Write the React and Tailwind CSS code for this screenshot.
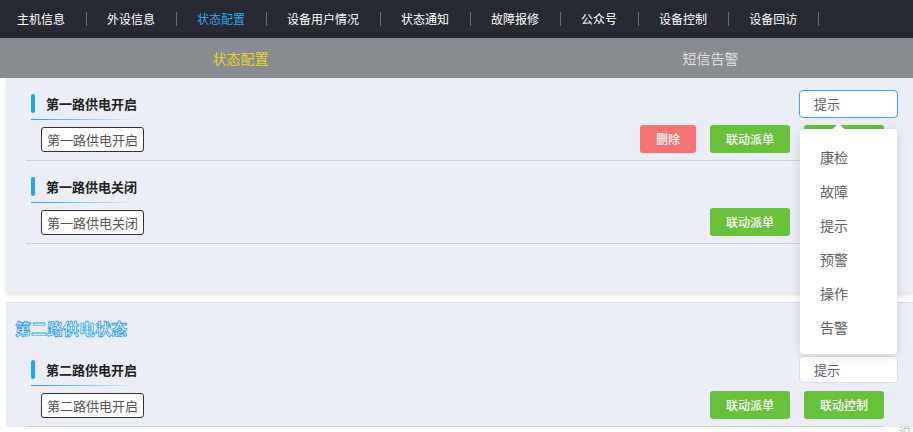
import React from "react";

const navItems = ["主机信息", "外设信息", "状态配置", "设备用户情况", "状态通知", "故障报修", "公众号", "设备控制", "设备回访"];
const options = ["康检", "故障", "提示", "预警", "操作", "告警"];

function Btn({ color, w, children }) {
  return (
    <div
      className={`h-[28px] ${w} rounded-[3px] ${color} text-white text-[12px] font-medium flex items-center justify-center`}
    >
      {children}
    </div>
  );
}

function Select({ focused, h }) {
  return (
    <div
      className={`w-[99px] ${h} mr-[-14px] rounded-[4px] bg-white border ${
        focused ? "border-[#409eff]" : "border-[#dcdfe6]"
      } flex items-center pl-[14px] text-[13px] text-[#606266] shrink-0`}
    >
      提示
    </div>
  );
}

function Row({ title, buttons, select }) {
  return (
    <div>
      <div className="pt-[16px] pl-[5px]">
        <div className="flex items-center justify-between h-[19px]">
          <div className="flex items-center">
            <div className="w-[4px] h-[19px] rounded-[2px] bg-[#1fa3f5]" />
            <div className="ml-[11px] text-[13px] font-bold text-[#222] leading-[19px]">{title}</div>
          </div>
          {select}
        </div>
        <div className="mt-[6px] h-px w-[106px] bg-gradient-to-r from-[#1fa3f5] to-transparent" />
        <div className="mt-[5px] h-[28px] flex items-center justify-between">
          <div className="ml-[10px] h-[25px] px-[5px] border border-[#333] rounded-[3px] bg-white text-[13px] text-[#555] leading-[23px]">
            {title}
          </div>
          <div className="flex items-center gap-[14px]">{buttons}</div>
        </div>
      </div>
      <div className="mt-[7px] h-px bg-[#cfd0d4]" />
    </div>
  );
}

export default function App() {
  return (
    <div
      className="relative w-full h-[432px] overflow-hidden bg-white"
      style={{ fontFamily: '"Noto Sans CJK SC", "Noto Sans", sans-serif' }}
    >
      {/* top nav */}
      <div className="h-[38px] bg-[#272a33] flex items-center pl-[17px]">
        {navItems.map((t, i) => (
          <div key={t} className="flex items-center">
            <span
              className={`text-[12px] ${i === 2 ? "text-[#2ea6e6]" : "text-white"} ${i === 0 ? "pr-[20.5px]" : "px-[20.5px]"}`}
            >
              {t}
            </span>
            <span className="w-px h-[14px] bg-[#6b6e75]" />
          </div>
        ))}
      </div>

      {/* sub tabs */}
      <div className="h-[40px] bg-[#888b8f] flex items-center overflow-hidden">
        <div className="w-[481px] shrink-0 text-center text-[14px] text-[#e8d41c]">状态配置</div>
        <div className="w-[459px] shrink-0 text-center text-[14px] text-[#dddddd]">短信告警</div>
      </div>

      <div className="pl-[6px]">
        {/* panel 1 */}
        <div className="bg-[#eaedf5] pb-[48px] shadow-[0_3px_4px_rgba(0,0,0,0.12)]">
          <div className="ml-[20px] w-[858px]">
            <Row
              title="第一路供电开启"
              select={<Select focused h="h-[28px]" />}
              buttons={
                <>
                  <Btn color="bg-[#f77272]" w="w-[56px]">删除</Btn>
                  <Btn color="bg-[#67c23a]" w="w-[80px]">联动派单</Btn>
                  <Btn color="bg-[#67c23a]" w="w-[80px]">联动控制</Btn>
                </>
              }
            />
            <Row
              title="第一路供电关闭"
              buttons={
                <>
                  <Btn color="bg-[#67c23a]" w="w-[80px]">联动派单</Btn>
                  <div className="w-[80px]" />
                </>
              }
            />
          </div>
        </div>

        {/* panel 2 */}
        <div className="mt-[10px] border-t border-[#dcdde0] bg-[#eaedf5] pt-[13px] pl-[9px]">
          <div
            className="text-[16px] leading-[24px] font-bold text-white mb-[4px]"
            style={{ WebkitTextStroke: "0.8px #1f9ff2" }}
          >
            第二路供电状态
          </div>
          <div className="ml-[11px] w-[858px]">
            <Row
              title="第二路供电开启"
              select={<Select h="h-[27px]" />}
              buttons={
                <>
                  <Btn color="bg-[#67c23a]" w="w-[80px]">联动派单</Btn>
                  <Btn color="bg-[#67c23a]" w="w-[80px]">联动控制</Btn>
                </>
              }
            />
          </div>
        </div>
      </div>

      {/* dropdown */}
      <div className="absolute left-[800px] top-[129px] w-[97px] h-[225px] bg-white rounded-[4px] shadow-[0_2px_12px_rgba(0,0,0,0.12)] py-[11px]">
        <div className="absolute left-[34px] top-[-4px] w-[9px] h-[9px] bg-white rotate-45" />
        {options.map((o) => (
          <div key={o} className="h-[34px] flex items-center pl-[20px] text-[14px] text-[#606266]">
            {o}
          </div>
        ))}
      </div>

      <div className="absolute left-[899px] top-[423px] text-[12px] text-[#b5b5b5]">说明</div>
    </div>
  );
}
